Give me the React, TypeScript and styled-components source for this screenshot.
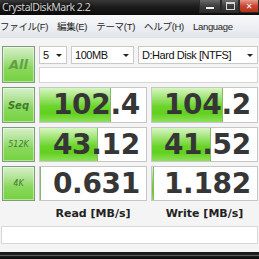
import React from "react"
import styled, { createGlobalStyle } from "styled-components"

const GlobalStyle = createGlobalStyle`
  html, body {
    margin: 0;
    padding: 0;
    background: #ffffff;
  }
  body {
    width: 259px;
    height: 259px;
    overflow: hidden;
  }
`

interface Result {
  label: string
  small?: boolean
  read: string
  readBar: number
  write: string
  writeBar: number
}

const results: Result[] = [
  { label: "Seq", read: "102.4", readBar: 67, write: "104.2", writeBar: 68 },
  { label: "512K", small: true, read: "43.12", readBar: 55, write: "41.52", writeBar: 56 },
  { label: "4K", small: true, read: "0.631", readBar: 1, write: "1.182", writeBar: 2 },
]

const menus = ["ファイル(F)", "編集(E)", "テーマ(T)", "ヘルプ(H)", "Language"]

const App = (): JSX.Element => {
  return (
    <>
      <GlobalStyle />
      <Window>
        <TitleBar>
          <Title>CrystalDiskMark 2.2</Title>
          <Controls>
            <CtrlBtn $w={22}>
              <MinGlyph />
            </CtrlBtn>
            <CtrlBtn $w={18}>
              <MaxGlyph />
            </CtrlBtn>
            <CtrlBtn $w={20} $close>
              <CloseGlyph>✕</CloseGlyph>
            </CtrlBtn>
          </Controls>
        </TitleBar>
        <MenuBar>
          {menus.map((m) => (
            <MenuItem key={m}>{m}</MenuItem>
          ))}
        </MenuBar>
        <Body>
          <AllButton>All</AllButton>
          <TopPanel>
            <Combos>
              <Combo $w={28}>
                <span>5</span>
                <Arrow />
              </Combo>
              <Combo $w={63}>
                <span>100MB</span>
                <Arrow />
              </Combo>
              <Combo $grow>
                <span>D:Hard Disk [NTFS]</span>
                <Arrow />
              </Combo>
            </Combos>
            <InfoBox />
          </TopPanel>
          {results.map((r) => (
            <React.Fragment key={r.label}>
              <TestButton $small={r.small}>{r.label}</TestButton>
              <Cell>
                <Bar style={{ width: `${r.readBar}%` }} />
                <Value>{r.read}</Value>
              </Cell>
              <Cell>
                <Bar style={{ width: `${r.writeBar}%` }} />
                <Value>{r.write}</Value>
              </Cell>
            </React.Fragment>
          ))}
          <Spacer />
          <Unit>Read [MB/s]</Unit>
          <Unit>Write [MB/s]</Unit>
          <Comment />
        </Body>
        <BottomEdge />
      </Window>
    </>
  )
}

const Window = styled.div`
  width: 259px;
  height: 259px;
  display: flex;
  flex-direction: column;
  background: #f7f7f7;
  overflow: hidden;
`

const TitleBar = styled.div`
  height: 15px;
  flex: none;
  display: flex;
  align-items: flex-start;
  background: linear-gradient(to bottom, #3a3a3a 0%, #1c1c1c 45%, #0c0c0c 100%);
`

const Title = styled.div`
  padding: 0 0 0 2px;
  line-height: 15px;
  font-family: "Noto Sans", "Liberation Sans", sans-serif;
  font-size: 10.5px;
  letter-spacing: -0.5px;
  color: #cfcfcf;
  text-shadow: 0 0 4px #000;
  white-space: nowrap;
`

const Controls = styled.div`
  margin-left: auto;
  display: flex;
  height: 13px;
`

const CtrlBtn = styled.div<{ $w: number; $close?: boolean }>`
  width: ${(p) => p.$w}px;
  height: 13px;
  display: flex;
  align-items: center;
  justify-content: center;
  border: 1px solid #2a2a2a;
  border-top: none;
  box-sizing: border-box;
  background: ${(p) =>
    p.$close
      ? "linear-gradient(to bottom, #e89a8a 0%, #c8452e 50%, #b8301a 100%)"
      : "linear-gradient(to bottom, #6a6a6a 0%, #3e3e3e 50%, #2c2c2c 100%)"};
  border-radius: 0 0 ${(p) => (p.$close ? "0 3px" : "0 0")};
`

const MinGlyph = styled.div`
  width: 8px;
  height: 2px;
  margin-top: 4px;
  background: #f0f0f0;
`

const MaxGlyph = styled.div`
  width: 7px;
  height: 5px;
  border: 1px solid #d8d8d8;
  border-top-width: 2px;
`

const CloseGlyph = styled.span`
  font-family: "DejaVu Sans", sans-serif;
  font-size: 8px;
  font-weight: bold;
  color: #ffffff;
`

const MenuBar = styled.div`
  height: 23px;
  flex: none;
  display: flex;
  align-items: center;
  gap: 9px;
  padding-left: 0;
  background: linear-gradient(to bottom, #f8f9fb 0%, #eef0f4 50%, #e2e6ec 100%);
  border-bottom: 1px solid #dfe3e8;
  box-sizing: border-box;
  overflow: hidden;
`

const MenuItem = styled.div`
  font-family: "Liberation Sans", "Noto Sans CJK JP", sans-serif;
  font-size: 9.5px;
  letter-spacing: -0.3px;
  color: #1e1e1e;
  white-space: nowrap;
`

const Body = styled.div`
  flex: 1;
  display: grid;
  grid-template-columns: 33px 108px 107px;
  grid-template-rows: 37px 36px 35px 35px 17px 18px;
  column-gap: 4px;
  row-gap: 4px;
  padding: 8px 1px 0 2px;
  background: #f4f4f4;
`

const greenButton = `
  box-sizing: border-box;
  border: 1px solid #7f9c78;
  background: linear-gradient(to bottom, #d6f0c8 0%, #b4e49a 30%, #8ad85e 60%, #74d240 100%);
  box-shadow: inset 0 0 0 1px rgba(255, 255, 255, 0.45);
  display: flex;
  align-items: center;
  justify-content: center;
  font-family: "DejaVu Sans", Verdana, sans-serif;
  font-style: italic;
  font-weight: bold;
`

const AllButton = styled.div`
  ${greenButton}
  font-size: 13px;
  color: #62a042;
`

const TestButton = styled.div<{ $small?: boolean }>`
  ${greenButton}
  font-size: ${(p) => (p.$small ? "8px" : "10px")};
  font-weight: ${(p) => (p.$small ? "normal" : "bold")};
  color: #3e7c2a;
`

const TopPanel = styled.div`
  grid-column: 2 / 4;
  display: flex;
  flex-direction: column;
  gap: 3px;
`

const Combos = styled.div`
  display: flex;
  gap: 4px;
  height: 18px;
`

const Combo = styled.div<{ $w?: number; $grow?: boolean }>`
  ${(p) => (p.$grow ? "flex: 1;" : `width: ${p.$w}px;`)}
  box-sizing: border-box;
  border: 1px solid #c9c9c9;
  background: #ffffff;
  display: flex;
  align-items: center;
  padding: 0 4px 0 3px;
  font-family: "Liberation Sans", Arial, sans-serif;
  font-size: 11px;
  letter-spacing: -0.45px;
  color: #111;
  white-space: nowrap;

  > span {
    flex: 1;
  }
`

const Arrow = styled.div`
  width: 0;
  height: 0;
  border-left: 3px solid transparent;
  border-right: 3px solid transparent;
  border-top: 3px solid #222;
`

const InfoBox = styled.div`
  flex: 1;
  box-sizing: border-box;
  border: 1px solid #d6d6d6;
  background: #ffffff;
`

const Cell = styled.div`
  position: relative;
  box-sizing: border-box;
  border: 1px solid #c6c6c6;
  background: #ffffff;
  overflow: hidden;
  display: flex;
  align-items: center;
  justify-content: flex-end;
`

const Bar = styled.div`
  position: absolute;
  left: 0;
  top: 0;
  bottom: 0;
  box-sizing: border-box;
  border-right: 1px solid #88b870;
  background: linear-gradient(to bottom, #d8f6c2 0%, #a8e680 25%, #6ad42a 55%, #62d01e 75%, #8ee05c 100%);
`

const Value = styled.div`
  position: relative;
  padding-right: 6px;
  font-family: "DejaVu Sans", Verdana, sans-serif;
  font-weight: bold;
  font-size: 28px;
  letter-spacing: -0.3px;
  line-height: 1;
  color: #363636;
`

const Spacer = styled.div``

const Unit = styled.div`
  display: flex;
  align-items: center;
  justify-content: center;
  font-family: "DejaVu Sans", Verdana, sans-serif;
  font-weight: bold;
  font-size: 11px;
  color: #222;
`

const Comment = styled.div`
  grid-column: 1 / 4;
  margin-left: -1px;
  box-sizing: border-box;
  border: 1px solid #d8d8d8;
  background: #ffffff;
`

const BottomEdge = styled.div`
  height: 7px;
  flex: none;
  background: linear-gradient(to bottom, #1a1a1a 0%, #1a1a1a 35%, #7a7a7a 45%, #1a1a1a 60%, #0a0a0a 100%);
`

export default App
